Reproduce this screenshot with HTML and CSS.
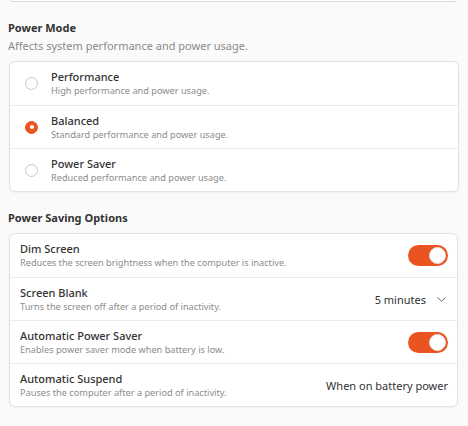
FILE: index.html
```html
<!DOCTYPE html>
<html>
<head>
<meta charset="utf-8">
<link rel="stylesheet" href="styles.css">
</head>
<body>
<div class="page">
  <div class="prev-card"></div>

  <section class="group mode">
    <h2 class="group-title">Power Mode</h2>
    <p class="group-sub">Affects system performance and power usage.</p>
    <div class="card">
      <div class="row radio-row">
        <span class="radio"></span>
        <div class="texts">
          <div class="title">Performance</div>
          <div class="desc">High performance and power usage.</div>
        </div>
      </div>
      <div class="row radio-row">
        <span class="radio checked"></span>
        <div class="texts">
          <div class="title">Balanced</div>
          <div class="desc">Standard performance and power usage.</div>
        </div>
      </div>
      <div class="row radio-row">
        <span class="radio"></span>
        <div class="texts">
          <div class="title">Power Saver</div>
          <div class="desc">Reduced performance and power usage.</div>
        </div>
      </div>
    </div>
  </section>

  <section class="group saving">
    <h2 class="group-title">Power Saving Options</h2>
    <div class="card">
      <div class="row opt-row">
        <div class="texts">
          <div class="title">Dim Screen</div>
          <div class="desc">Reduces the screen brightness when the computer is inactive.</div>
        </div>
        <span class="switch on"><span class="knob"></span></span>
      </div>
      <div class="row opt-row">
        <div class="texts">
          <div class="title">Screen Blank</div>
          <div class="desc">Turns the screen off after a period of inactivity.</div>
        </div>
        <div class="combo">
          <span class="value">5 minutes</span>
          <svg class="chev" width="9" height="5" viewBox="0 0 9 5"><path d="M0.8 0.8 L4.5 4.2 L8.2 0.8" fill="none" stroke="#666" stroke-width="1" stroke-linecap="round" stroke-linejoin="round"/></svg>
        </div>
      </div>
      <div class="row opt-row">
        <div class="texts">
          <div class="title">Automatic Power Saver</div>
          <div class="desc">Enables power saver mode when battery is low.</div>
        </div>
        <span class="switch on"><span class="knob"></span></span>
      </div>
      <div class="row opt-row">
        <div class="texts">
          <div class="title">Automatic Suspend</div>
          <div class="desc">Pauses the computer after a period of inactivity.</div>
        </div>
        <span class="value plain">When on battery power</span>
      </div>
    </div>
  </section>
</div>
</body>
</html>
```
FILE: styles.css
```css
html, body {
  margin: 0;
  padding: 0;
  background: #fafafa;
}
body {
  font-family: "Noto Sans", "Open Sans", sans-serif;
  color: #333;
  width: 468px;
  height: 426px;
  overflow: hidden;
}
.page {
  padding: 0 9px 0 9px;
}
.prev-card {
  height: 1px;
  margin: 0 3px 0 1px;
  border: 1px solid #dcdcdc;
  border-top: none;
  border-radius: 0 0 6px 6px;
  background: #fff;
}
.group-title {
  margin: 0;
  margin-left: -1px;
  font-size: 11px;
  font-weight: 700;
  color: #333;
  line-height: 14px;
}
.mode .group-title {
  margin-top: 19px;
}
.group-sub {
  margin: 4px 0 0 -1px;
  font-size: 11px;
  color: #8a8a8a;
  line-height: 14px;
}
.card {
  background: #fff;
  border: 1px solid #e2e2e2;
  border-radius: 6px;
  box-shadow: 0 1px 2px rgba(0,0,0,0.05);
}
.mode .card {
  margin-top: 8px;
}
.saving .group-title {
  margin-top: 19px;
}
.saving .card {
  margin-top: 8px;
  margin-right: 1px;
}
.row {
  display: flex;
  align-items: center;
  height: 43px;
  box-sizing: border-box;
}
.row + .row {
  border-top: 1px solid #ebebeb;
}
.radio-row {
  padding-left: 15px;
}
.radio {
  width: 13px;
  height: 13px;
  border: 1px solid #c8c8c8;
  border-radius: 50%;
  box-sizing: border-box;
  margin-right: 13px;
  flex: none;
  position: relative;
}
.radio.checked {
  background: #e95420;
  border-color: #e95420;
}
.radio.checked::after {
  content: "";
  position: absolute;
  left: 3.5px;
  top: 3.5px;
  width: 4px;
  height: 4px;
  border-radius: 50%;
  background: #fff;
}
.texts {
  flex: 1;
  min-width: 0;
}
.title {
  font-size: 11px;
  font-weight: 500;
  color: #333;
  line-height: 14px;
}
.desc {
  font-size: 9.2px;
  color: #8c8c8c;
  line-height: 12px;
  margin-top: 1px;
}
.opt-row {
  padding-left: 10px;
  padding-right: 9px;
}
.switch {
  width: 40px;
  height: 21px;
  border-radius: 10.5px;
  background: #e95420;
  flex: none;
  position: relative;
}
.switch .knob {
  position: absolute;
  right: 2px;
  top: 2px;
  width: 17px;
  height: 17px;
  box-sizing: border-box;
  border: 1px solid #e6e0dd;
  border-radius: 50%;
  background: #fff;
}
.combo {
  display: flex;
  align-items: center;
  gap: 11px;
  padding-right: 2px;
}
.chev {
  display: block;
}
.value {
  font-size: 11px;
  color: #333;
}
```
